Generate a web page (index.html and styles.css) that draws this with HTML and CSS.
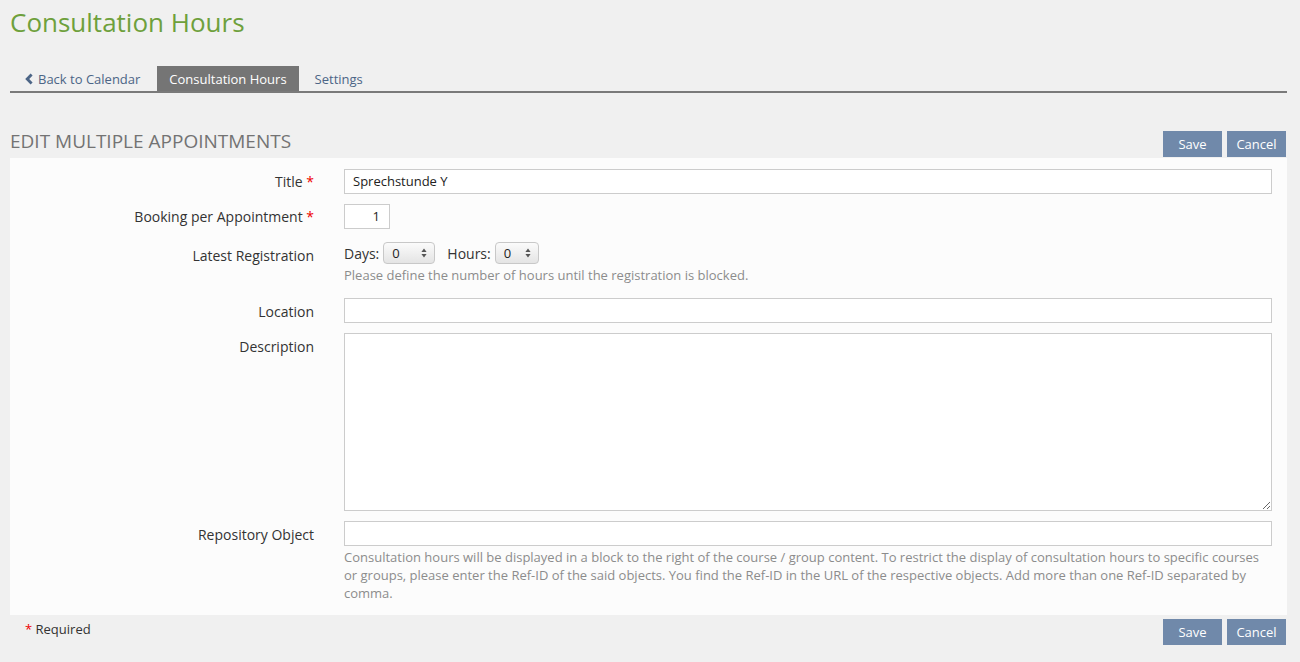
FILE: index.html
```html
<!DOCTYPE html>
<html>
<head>
<meta charset="utf-8">
<link rel="stylesheet" href="styles.css">
</head>
<body>
<div class="page">
  <h1 class="headline">Consultation Hours</h1>
  <ul class="tabs">
    <li class="tab back"><svg class="chev" width="10" height="12" viewBox="0 0 10 12"><path d="M7.6 0.6 L9.6 2.6 L6.2 6 L9.6 9.4 L7.6 11.4 L2.2 6 Z" fill="#4c6586"/></svg>Back to Calendar</li>
    <li class="tab active">Consultation Hours</li>
    <li class="tab">Settings</li>
  </ul>
  <div class="form-head">
    <h2 class="form-title">EDIT MULTIPLE APPOINTMENTS</h2>
    <div class="btns"><span class="btn">Save</span><span class="btn">Cancel</span></div>
  </div>
  <div class="panel">
    <div class="row r-title">
      <div class="label">Title <span class="req">*</span></div>
      <div class="field"><div class="input">Sprechstunde Y</div></div>
    </div>
    <div class="row r-book">
      <div class="label">Booking per Appointment <span class="req">*</span></div>
      <div class="field"><div class="input num">1</div></div>
    </div>
    <div class="row r-latest">
      <div class="label lab-latest">Latest Registration</div>
      <div class="field">
        <div class="selects">
          <span class="sel-label">Days:</span>
          <span class="select w52">0<svg class="arr" width="6" height="10" viewBox="0 0 6 10"><path d="M3 0.5 L5.6 4 L0.4 4 Z M3 9.5 L5.6 6 L0.4 6 Z" fill="#555"/></svg></span>
          <span class="sel-label hours">Hours:</span>
          <span class="select w44">0<svg class="arr" width="6" height="10" viewBox="0 0 6 10"><path d="M3 0.5 L5.6 4 L0.4 4 Z M3 9.5 L5.6 6 L0.4 6 Z" fill="#555"/></svg></span>
        </div>
        <div class="help">Please define the number of hours until the registration is blocked.</div>
      </div>
    </div>
    <div class="row r-loc">
      <div class="label lab-low">Location</div>
      <div class="field"><div class="input"></div></div>
    </div>
    <div class="row r-desc">
      <div class="label lab-low">Description</div>
      <div class="field"><textarea class="textarea"></textarea></div>
    </div>
    <div class="row r-repo">
      <div class="label lab-low">Repository Object</div>
      <div class="field">
        <div class="input"></div>
        <div class="help">Consultation hours will be displayed in a block to the right of the course / group content. To restrict the display of consultation hours to specific courses or groups, please enter the Ref-ID of the said objects. You find the Ref-ID in the URL of the respective objects. Add more than one Ref-ID separated by comma.</div>
      </div>
    </div>
  </div>
  <div class="form-foot">
    <div class="required"><span class="req">*</span> Required</div>
    <div class="btns"><span class="btn">Save</span><span class="btn">Cancel</span></div>
  </div>
</div>
</body>
</html>
```

FILE: styles.css
```css
html, body {
  margin: 0;
  padding: 0;
  background: #f0f0f0;
  font-family: "Open Sans", "Liberation Sans", sans-serif;
  color: #333;
}
.page {
  width: 1277px;
  padding: 0 13px 0 10px;
}
.headline {
  margin: 7px 0 0;
  font-size: 26px;
  line-height: 31px;
  font-weight: 400;
  color: #6ea03c;
}
.tabs {
  list-style: none;
  margin: 28px 0 0;
  padding: 0;
  display: flex;
  border-bottom: 2px solid #7a7a7a;
}
.tab {
  height: 24px;
  padding: 1px 12px 0;
  line-height: 24px;
  font-size: 13px;
  margin-right: 4px;
  color: #4c6586;
  display: flex;
  align-items: center;
}
.tab.back {
  padding-left: 13px;
  padding-right: 13px;
}
.chev {
  margin-right: 5px;
  margin-top: 0;
}
.tab.active {
  background: #757575;
  color: #fff;
}
.form-head {
  display: flex;
  justify-content: space-between;
  align-items: flex-start;
  margin-top: 38px;
  margin-bottom: 1px;
}
.form-title {
  margin: 0;
  font-size: 19px;
  line-height: 20px;
  font-weight: 400;
  color: #737373;
}
.btns {
  display: flex;
  gap: 5px;
  padding-right: 1px;
}
.btn {
  width: 59px;
  height: 26px;
  line-height: 26px;
  text-align: center;
  font-size: 13px;
  color: #fff;
  background: #7089aa;
}
.panel {
  background: #fcfcfc;
  padding: 11px 0 13px;
}
.row {
  display: grid;
  grid-template-columns: 319px 958px;
}
.label {
  padding: 3px 15px 0 0;
  text-align: right;
  font-size: 14px;
  line-height: 20px;
  color: #333;
}
.lab-low {
  padding-top: 4px;
}
.req {
  color: #e00;
}
.field {
  padding: 0 15px;
}
.input {
  height: 23px;
  border: 1px solid #ccc;
  background: #fff;
  font-size: 13px;
  line-height: 23px;
  padding-left: 8px;
  color: #222;
}
.input.num {
  width: 35px;
  padding-left: 0;
  padding-right: 9px;
  text-align: right;
}
.r-title { margin-bottom: 10px; }
.r-book { margin-bottom: 13px; }
.lab-latest { padding-top: 4px; }
.r-latest { margin-bottom: 14px; }
.selects {
  display: flex;
  align-items: center;
  height: 22px;
}
.sel-label {
  font-size: 14px;
  margin-right: 4px;
  color: #333;
}
.sel-label.hours {
  margin-left: 12px;
}
.select {
  position: relative;
  box-sizing: border-box;
  height: 22px;
  border: 1px solid #c8c8c8;
  border-radius: 4px;
  background: linear-gradient(#fbfbfb, #e4e4e4);
  font-size: 13px;
  line-height: 20px;
  padding-left: 8px;
  color: #222;
}
.w52 { width: 52px; }
.w44 { width: 44px; }
.arr {
  position: absolute;
  right: 7px;
  top: 5px;
}
.help {
  margin-top: 2px;
  font-size: 13px;
  line-height: 18px;
  color: #8c8c8c;
}
.r-loc { margin-bottom: 10px; }
.textarea {
  display: block;
  box-sizing: border-box;
  width: 928px;
  height: 178px;
  margin: 0;
  border: 1px solid #ccc;
  background: #fff;
  font-family: inherit;
  resize: both;
}
.r-desc { margin-bottom: 10px; }
.form-foot {
  display: flex;
  justify-content: space-between;
  align-items: flex-start;
  margin-top: 4px;
  padding-left: 15px;
}
.required {
  font-size: 13px;
  line-height: 20px;
  color: #333;
}
```
